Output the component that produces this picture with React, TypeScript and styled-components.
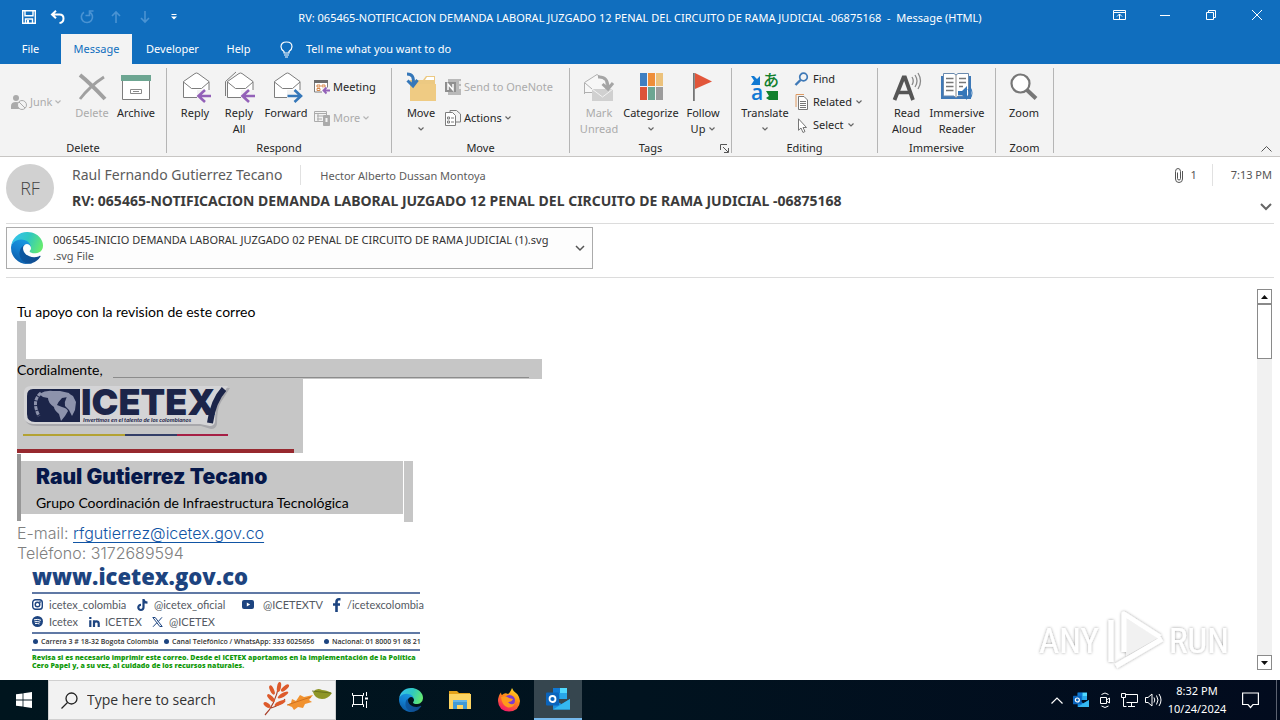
import React from 'react';
import styled, { createGlobalStyle } from 'styled-components';

const ui = '"Noto Sans", "Open Sans", sans-serif';
const body = 'Lato, "Open Sans", sans-serif';

const Global = createGlobalStyle`
  *, *::before, *::after { box-sizing: border-box; }
  body { margin: 0; background: #fff; font-family: ${ui}; font-size: 11px; line-height: 16px; color: #262626; }
  button { font: inherit; color: inherit; background: none; border: 0; padding: 0; margin: 0; cursor: default; }
  input { font: inherit; color: inherit; background: none; border: 0; padding: 0; margin: 0; min-width: 0; outline: 0; }
  p, h1, h2 { margin: 0; font: inherit; }
  svg { display: block; flex: none; overflow: visible; }
`;

const Screen = styled.div`
  display: flex;
  flex-direction: column;
  min-height: 100vh;
`;

/* ---------- title bar ---------- */
const TopBar = styled.header`
  background: #106ebe;
  color: #fff;
`;
const TitleRow = styled.div`
  display: flex;
  height: 34px;
`;
const QuickAccess = styled.div`
  display: flex;
  flex: none;
  width: 188px;
  padding-left: 14px;
`;
const QuickButton = styled.button<{ $dim?: boolean }>`
  display: grid;
  place-items: center;
  width: 29px;
  height: 33px;
  color: ${p => (p.$dim ? '#4a93d3' : '#fff')};
`;
const WindowTitle = styled.h1`
  flex: 1;
  padding-right: 4px;
  text-align: center;
  line-height: 36px;
  white-space: pre;
  overflow: hidden;
`;
const WindowButton = styled.button`
  display: grid;
  place-items: center;
  width: 46px;
  height: 30px;
`;
const TabRow = styled.nav`
  display: flex;
  height: 30px;
`;
const Tab = styled.button<{ $w: number; $active?: boolean }>`
  width: ${p => p.$w}px;
  background: ${p => (p.$active ? '#f3f3f3' : 'transparent')};
  color: ${p => (p.$active ? '#106ebe' : '#fff')};
`;
const TellMe = styled.label`
  display: flex;
  align-items: center;
  gap: 13px;
  padding-left: 16px;
  input { width: 180px; }
  input::placeholder { color: #fff; opacity: 1; }
`;

/* ---------- ribbon ---------- */
const Ribbon = styled.div`
  display: flex;
  height: 93px;
  padding-top: 4px;
  background: #f3f3f3;
  border-bottom: 1px solid #c8c6c4;
`;
const Group = styled.section<{ $w: number }>`
  position: relative;
  display: flex;
  flex-direction: column;
  width: ${p => p.$w}px;
  height: 85px;
  border-right: 1px solid #b5b5b5;
`;
const GroupTools = styled.div<{ $pad: number }>`
  display: flex;
  flex: 1;
  padding-left: ${p => p.$pad}px;
`;
const GroupName = styled.h2`
  height: 13px;
  text-align: center;
`;
const BigButton = styled.button<{ $w: number; $dim?: boolean }>`
  display: flex;
  flex-direction: column;
  align-items: center;
  flex: none;
  width: ${p => p.$w}px;
  height: 70px;
  color: ${p => (p.$dim ? '#ababab' : '#262626')};
  white-space: nowrap;
`;
const BigIcon = styled.span`
  display: grid;
  place-items: center;
  height: 37px;
`;
const SecondLine = styled.span`
  display: flex;
  align-items: center;
  justify-content: center;
  gap: 4px;
  height: 16px;
`;
const SmallStack = styled.div<{ $top: number; $gap?: number; $left: number; $w?: number }>`
  display: flex;
  flex-direction: column;
  align-items: flex-start;
  flex: none;
  gap: ${p => p.$gap ?? 0}px;
  width: ${p => (p.$w ? `${p.$w}px` : 'auto')};
  padding: ${p => p.$top}px 0 0 ${p => p.$left}px;
`;
const SmallButton = styled.button<{ $dim?: boolean; $gap?: number }>`
  display: flex;
  align-items: center;
  gap: ${p => p.$gap ?? 3}px;
  height: 16px;
  color: ${p => (p.$dim ? '#ababab' : '#262626')};
  white-space: nowrap;
`;
const Launcher = styled.button`
  position: absolute;
  right: 2px;
  bottom: 0;
`;
const RibbonEnd = styled.div`
  display: flex;
  flex: 1;
  align-items: flex-end;
  justify-content: flex-end;
  padding: 0 8px 4px 0;
`;

/* ---------- message header ---------- */
const MessageHead = styled.section`
  display: flex;
  gap: 18px;
  height: 67px;
  margin: 0 6px;
  padding-top: 7px;
  border-bottom: 1px solid #dcdcdc;
`;
const Avatar = styled.div`
  display: grid;
  place-items: center;
  width: 48px;
  height: 48px;
  border-radius: 50%;
  background: #d1d1d1;
  color: #444;
  font: 300 18px/24px "Open Sans", sans-serif;
`;
const HeadText = styled.div`
  flex: 1;
  min-width: 0;
`;
const People = styled.div`
  display: flex;
  align-items: center;
  height: 22px;
  color: #5c5c5c;
`;
const Sender = styled.span`
  padding-right: 18px;
  border-right: 1px solid #e1e1e1;
  font-size: 14px;
  line-height: 20px;
`;
const Recipient = styled.span`
  padding: 2px 0 0 19px;
`;
const Subject = styled.h2`
  padding-top: 4px;
  font-size: 14px;
  line-height: 22px;
  font-weight: 700;
  color: #3b3b3b;
  white-space: nowrap;
`;
const HeadMeta = styled.div`
  display: flex;
  flex-direction: column;
  align-items: flex-end;
  justify-content: space-between;
  padding: 0 2px 12px 0;
  color: #555;
`;
const MetaRow = styled.div`
  display: flex;
  align-items: center;
  gap: 7px;
  height: 22px;
`;
const Received = styled.time`
  margin-left: 8px;
  padding-left: 18px;
  border-left: 1px solid #e1e1e1;
  line-height: 22px;
`;
const AttachRow = styled.section`
  margin: 0 6px;
  padding: 3px 0 8px;
  border-bottom: 1px solid #dcdcdc;
`;
const Attachment = styled.button`
  display: flex;
  align-items: center;
  width: 587px;
  height: 42px;
  padding: 0 7px 0 4px;
  border: 1px solid #ababab;
  background: #fdfdfd;
  text-align: left;
  color: #333;
`;
const AttachName = styled.span`
  flex: 1;
  padding-left: 10px;
  white-space: nowrap;
  small { display: block; font-size: 11px; color: #555; }
`;

/* ---------- message body ---------- */
const Reading = styled.main`
  position: relative;
  display: flex;
  flex: 1;
`;
const Mail = styled.article`
  flex: 1;
  padding: 24px 0 0 17px;
  font-family: ${body};
  font-size: 14px;
  line-height: 19px;
  color: #000;
`;
const SelectedBlank = styled.div`
  width: 9px;
  height: 38px;
  background: #c6c6c6;
`;
const Closing = styled.p`
  display: flex;
  width: 525px;
  height: 20px;
  padding-right: 13px;
  background: #c6c6c6;
  line-height: 22px;
`;
const BlankLine = styled.span`
  flex: 1;
  height: 19px;
  margin-left: 10px;
  border-bottom: 1px solid #8c8c8c;
`;
const LogoBox = styled.div`
  width: 286px;
  height: 74px;
  background: #c6c6c6;
`;
const Signature = styled.div`
  display: flex;
  align-items: flex-start;
  gap: 1px;
  margin-top: 1px;
  padding-bottom: 1px;
`;
const SignatureBar = styled.div`
  width: 386px;
  height: 67px;
  padding-top: 7px;
  border-left: 4px solid #979797;
`;
const SignatureText = styled.div`
  height: 53px;
  padding-left: 15px;
  background: #c6c6c6;
`;
const SignatureName = styled.p`
  font-family: Inter, "Open Sans", sans-serif;
  font-size: 21px;
  line-height: 32px;
  font-weight: 900;
  color: #06184a;
`;
const SignatureEnd = styled.div`
  width: 9px;
  height: 61px;
  margin-top: 7px;
  background: #c6c6c6;
`;
const Contact = styled.p`
  font-family: Inter, sans-serif;
  font-size: 16px;
  line-height: 20px;
  font-weight: 300;
  color: #808080;
  a { color: #1155a5; text-underline-offset: 3px; }
`;
const Footer = styled.footer`
  width: 400px;
  padding-left: 15px;
`;
const Site = styled.p`
  height: 29px;
  font-family: "Open Sans", sans-serif;
  font-size: 22px;
  line-height: 26px;
  font-weight: 800;
  color: #1d4480;
`;
const Rules = styled.div<{ $pad: number }>`
  width: 388px;
  padding: ${p => p.$pad}px 0;
  border-top: 2px solid #6079a5;
  white-space: nowrap;
`;
const Socials = styled.div<{ $cols: string }>`
  display: grid;
  grid-template-columns: ${p => p.$cols};
  font-size: 11px;
  line-height: 17px;
  color: #555a63;
`;
const Social = styled.span<{ $slot?: number }>`
  display: grid;
  grid-template-columns: ${p => p.$slot ?? 17}px auto;
  align-items: center;
  justify-content: start;
`;
const Addresses = styled.div`
  display: grid;
  grid-template-columns: 131px 160px auto;
  font: 600 7px/9px "Open Sans", sans-serif;
  color: #333;
`;
const Address = styled.span`
  display: flex;
  align-items: center;
  gap: 3px;
  &::before { content: ''; width: 5px; height: 5px; margin-left: 1px; border-radius: 50%; background: #1d4480; }
`;
const Notice = styled.p`
  font: 800 7px/8px "Open Sans", sans-serif;
  color: #139a0c;
`;

const ScrollBar = styled.div`
  display: flex;
  flex-direction: column;
  width: 15px;
  margin: 11px 8px 10px 0;
  background: #f1f1f1;
`;
const ScrollButton = styled.button`
  display: grid;
  place-items: center;
  height: 15px;
  border: 1px solid #8a8a8a;
  background: #fff;
`;
const Thumb = styled.div`
  height: 55px;
  border: 1px solid #8a8a8a;
  background: #fff;
`;
const Track = styled.div`
  flex: 1;
`;
const Watermark = styled.div`
  position: absolute;
  right: 44px;
  bottom: 6px;
`;

/* ---------- taskbar ---------- */
const Taskbar = styled.footer`
  display: flex;
  height: 40px;
  background: linear-gradient(90deg, #00151e 0%, #01131f 50%, #020b1e 100%);
  color: #fff;
`;
const TaskButton = styled.button<{ $active?: boolean; $w?: number }>`
  display: grid;
  place-items: center;
  width: ${p => p.$w ?? 48}px;
  height: 40px;
  background: ${p => (p.$active ? '#36464f' : 'transparent')};
  border-bottom: ${p => (p.$active ? '2px solid #76b9ed' : '0')};
`;
const Search = styled.label`
  display: flex;
  align-items: center;
  gap: 9px;
  width: 288px;
  padding: 0 2px 0 12px;
  border: 1px solid #d0d0d0;
  background: #f2f2f2;
  color: #333;
  font: 14px/20px "Open Sans", sans-serif;
  input { flex: 1; }
  input::placeholder { color: #333; opacity: 1; }
`;
const Apps = styled.div`
  display: flex;
  gap: 1px;
  padding-left: 3px;
`;
const Tray = styled.div`
  display: flex;
  margin-left: auto;
`;
const Clock = styled.div`
  width: 64px;
  padding-top: 2px;
  text-align: center;
  line-height: 18px;
`;
const ShowDesktop = styled.button`
  width: 4px;
  margin-left: 5px;
  border-left: 1px solid #5b6170;
`;

/* ---------- glyphs ---------- */
const Caret = ({ c = '#666' }: { c?: string }) => (
  <svg width="6" height="4" viewBox="0 0 6 4" fill="none" stroke={c} strokeWidth="1.2"><path d="M.5.5 3 3 5.5.5" /></svg>
);
const Chevron = () => (
  <svg width="12" height="8" viewBox="0 0 12 8" fill="none" stroke="#666" strokeWidth="2"><path d="m1 1 5 5 5-5" /></svg>
);

const Envelope = ({ kind }: { kind: 'reply' | 'all' | 'forward' }) => (
  <svg width="32" height="34" viewBox="0 0 32 34" fill="none" stroke="#7d7d7d">
    {kind === 'all' && <path d="M2.5 26V11.500L13 2" />}
    <path d="M4.500 27.500v-16L16 3.500q1.500-1 3 0l11 8v16z" fill="#fff" />
    <path d="m4.500 12 8 6.500h10l7.500-6.500" />
    {kind === 'forward' ? (
      <g>
        <path d="M17 20h15v13H17z" fill="#f3f3f3" stroke="none" />
        <path d="M17.500 26h13M24.500 20l6.500 6-6.500 6" stroke="#3577b9" strokeWidth="2.6" />
      </g>
    ) : (
      <g>
        <path d="M18 20h14v13H18z" fill="#f3f3f3" stroke="none" />
        <path d="M32 26H19.500M26 20l-6.500 6 6.500 6" stroke="#9361b8" strokeWidth="2.6" />
      </g>
    )}
  </svg>
);

const EdgeLogo = ({ size, id }: { size: number; id: string }) => (
  <svg width={size} height={size} viewBox="4.600 4.900 256 256">
    <defs>
      <linearGradient id={id + 'a'} x1="0" x2="1"><stop offset="0" stopColor="#0c59a4" /><stop offset="1" stopColor="#114a8b" /></linearGradient>
      <linearGradient id={id + 'b'} x1=".7" y1="0" x2=".3" y2="1"><stop offset="0" stopColor="#1b9de2" /><stop offset=".5" stopColor="#127fd0" /><stop offset="1" stopColor="#0c59a4" /></linearGradient>
      <linearGradient id={id + 'c'} x1="0" y1=".3" x2="1" y2=".6"><stop offset="0" stopColor="#35c1f1" /><stop offset=".5" stopColor="#2fc8c0" /><stop offset="1" stopColor="#66eb6e" /></linearGradient>
    </defs>
    <path fill={`url(#${id}a)`} d="M235.680,195.460a93.730,93.730,0,0,1-10.540,4.710,101.870,101.870,0,0,1-35.900,6.460c-47.320,0-88.540-32.550-88.540-74.320A31.480,31.480,0,0,1,117.130,105c-42.800,1.800-53.800,46.400-53.800,72.530,0,73.880,68.090,81.370,82.760,81.370,7.910,0,19.840-2.300,27-4.560l1.310-.44A128.340,128.340,0,0,0,241,201.100a4,4,0,0,0-5.320-5.640Z" />
    <path fill={`url(#${id}b)`} d="M110.340,246.340A79.200,79.200,0,0,1,87.600,225a80.720,80.720,0,0,1,29.530-120c3.120-1.470,8.450-4.130,15.540-4a32.350,32.350,0,0,1,25.690,13,31.880,31.880,0,0,1,6.360,18.660c0-.21,24.460-79.600-80-79.600-43.900,0-80,41.660-80,78.210a130.150,130.150,0,0,0,12.110,56,128,128,0,0,0,156.380,67.110,75.550,75.550,0,0,1-62.780-8Z" />
    <path fill={`url(#${id}c)`} d="M156.940,153.780c-.81,1.050-3.300,2.500-3.300,5.660,0,2.610,1.700,5.120,4.720,7.230,14.380,10,41.490,8.680,41.560,8.680a59.560,59.560,0,0,0,30.270-8.350A61.380,61.380,0,0,0,260.640,114C261,91.480,253,76.550,249.760,70.160,229,29.840,185.770,5,136.640,5A128,128,0,0,0,4.630,131.100C5.110,94.630,41.410,65.180,84.650,65.180c3.500,0,23.460.34,42,10.070,16.340,8.580,24.900,18.940,30.850,29.210,6.180,10.670,7.280,24.150,7.280,29.520S162,147.650,156.940,153.780Z" />
  </svg>
);

const OutlookLogo = ({ size }: { size: number }) => (
  <svg width={size} height={size} viewBox="0 0 24 24">
    <path d="M7 1h14v11H7z" fill="#1490df" /><path d="M14 1h7v5h-7z" fill="#50d9ff" /><path d="M14 6h7v6h-7z" fill="#28a8ea" /><path d="M7 1h7v5H7z" fill="#0f78d4" />
    <path d="m7 12 8.500 5L24 12v10.500H7z" fill="#1a8fdf" /><path d="m24 12-17 10.500h17z" fill="#35b8f1" />
    <rect y="5.500" width="13" height="13" rx="1" fill="#0a64bc" />
    <circle cx="6.500" cy="12" r="3" fill="none" stroke="#fff" strokeWidth="1.800" />
  </svg>
);

const IcetexLogo = () => (
  <svg width="286" height="74" viewBox="0 0 286 74" role="img" aria-label="ICETEX">
    <path d="M15 9H213l-9 14q-4 6-4 22-1 5-6 5l-10-3H20q-12 0-12-9V16q0-7 7-7z" fill="#a8a8ac" />
    <path d="M14 7H211l-9 14q-4 7-4 22-1 4-5 4l-10-2H19q-12 0-12-8V14q0-7 7-7z" fill="#d4d4d6" />
    <path d="M16 10H63v33H18q-8 0-8-8V17q0-7 6-7z" fill="#1c2549" />
    <g fill="#8d93ac">
      <path d="M22 15q7-4 14-3l7 0 9 2q2 3-1 4l-6 1q-4 4-5 7l5 2q5 1 6 4l-3 5-4 5-2-7q-5-4-5-7-6-4-6-9l-5-1z" />
      <path d="M51 14l5 3 3 6-1 8-3 6-3-6-4-4q-1-4 1-7z" />
    </g>
    <path d="M24 14Q14 22 22 37" fill="none" stroke="#8d93ac" strokeWidth="3" strokeDasharray="4 1" />
    <text x="64" y="36" fontFamily="Inter, sans-serif" fontWeight="900" fontSize="36" fill="#1c2549">ICETEX</text>
    <path d="M207 10q-11 12-14 34" fill="none" stroke="#1c2549" strokeWidth="6" />
    <text x="66" y="43" fontFamily="Lato, sans-serif" fontStyle="italic" fontWeight="700" fontSize="6" fill="#1c2549">Invertimos en el talento de los colombianos</text>
    <path d="M6 56h102" stroke="#b3a233" strokeWidth="2" /><path d="M108 56h52" stroke="#343f68" strokeWidth="2" /><path d="M160 56h51" stroke="#a61f45" strokeWidth="2" />
    <path d="M0 72h277" stroke="#97292f" strokeWidth="4" />
  </svg>
);

export default function App() {
  return (
    <Screen>
      <Global />
      <TopBar>
        <TitleRow>
          <QuickAccess>
            <QuickButton aria-label="Save"><svg width="14" height="14" viewBox="0 0 14 14" fill="none" stroke="#fff" strokeWidth="1.400"><path d="M.7.7h12.600v12.600H.7zM3 .7v5h8v-5M3.500 13V9h7v4" /><path d="M5 10h2v3H5z" fill="#fff" stroke="none" /></svg></QuickButton>
            <QuickButton aria-label="Undo"><svg width="15" height="14" viewBox="0 0 15 14" fill="none" stroke="#fff" strokeWidth="2"><path d="M6 .8 2 4.500 6 8.300M2.200 4.500H9.500q4 0 4 4T9.500 13" /></svg></QuickButton>
            <QuickButton aria-label="Redo" $dim><svg width="14" height="14" viewBox="0 0 14 14" fill="none" stroke="currentColor" strokeWidth="1.600"><path d="M4 2.200A5.600 5.600 0 1 0 9.500 2M5.500 5.500h4V1h4" /></svg></QuickButton>
            <QuickButton aria-label="Previous item" $dim><svg width="10" height="12" viewBox="0 0 10 12" fill="none" stroke="currentColor" strokeWidth="1.600"><path d="M5 12V1.500M1 5l4-4 4 4" /></svg></QuickButton>
            <QuickButton aria-label="Next item" $dim><svg width="10" height="12" viewBox="0 0 10 12" fill="none" stroke="currentColor" strokeWidth="1.600"><path d="M5 0v10.500M1 7l4 4 4-4" /></svg></QuickButton>
            <QuickButton aria-label="Customize toolbar"><svg width="6" height="6" viewBox="0 0 6 6"><path d="M.5 0h5v1h-5zM0 2.500h6L3 5.500z" fill="#fff" /></svg></QuickButton>
          </QuickAccess>
          <WindowTitle>{'RV: 065465-NOTIFICACION DEMANDA LABORAL JUZGADO 12 PENAL DEL CIRCUITO DE RAMA JUDICIAL -06875168  -  Message (HTML)'}</WindowTitle>
          <WindowButton aria-label="Ribbon display options"><svg width="13" height="10" viewBox="0 0 13 10" fill="none" stroke="#fff"><path d="M.5.5h12v9H.500zM.5 2.500h12M6.500 9V4M4 6.500 6.500 4 9 6.500" /></svg></WindowButton>
          <WindowButton aria-label="Minimize"><svg width="10" height="1" viewBox="0 0 10 1"><path d="M0 0h10v1H0z" fill="#fff" /></svg></WindowButton>
          <WindowButton aria-label="Restore"><svg width="10" height="10" viewBox="0 0 10 10" fill="none" stroke="#fff"><path d="M.5 2.500h7v7h-7zM2.500 2.500v-2h7v7h-2" /></svg></WindowButton>
          <WindowButton aria-label="Close"><svg width="10" height="10" viewBox="0 0 10 10" stroke="#fff"><path d="m0 0 10 10M10 0 0 10" /></svg></WindowButton>
        </TitleRow>
        <TabRow>
          <Tab $w={61}>File</Tab>
          <Tab $w={71} $active>Message</Tab>
          <Tab $w={81}>Developer</Tab>
          <Tab $w={51}>Help</Tab>
          <TellMe>
            <svg width="13" height="17" viewBox="0 0 13 17" fill="none" stroke="#fff" strokeWidth="1.200"><path d="M4 12V10.500Q1 8.500 1 5.800 1 1 6.500 1T12 5.800Q12 8.500 9 10.500V12zM4 14h5M5 16h3" /></svg>
            <input type="text" aria-label="Tell me what you want to do" placeholder="Tell me what you want to do" />
          </TellMe>
        </TabRow>
      </TopBar>

      <Ribbon>
        <Group $w={167}>
          <GroupTools $pad={8}>
            <SmallStack $top={26} $left={3} $w={62}>
              <SmallButton $dim>
                <svg width="16" height="16" viewBox="0 0 16 16"><circle cx="5" cy="4" r="3" fill="#ababab" /><path d="M0 15v-3q0-4 5-4 2 0 4 1v6z" fill="#ababab" /><circle cx="11" cy="11" r="4.500" fill="#f3f3f3" stroke="#ababab" /><path d="m8 8 6 6" stroke="#ababab" /></svg>
                Junk <Caret c="#b5b5b5" />
              </SmallButton>
            </SmallStack>
            <BigButton $w={44} $dim>
              <BigIcon><svg width="28" height="26" viewBox="0 0 28 26" fill="none" stroke="#a0a0a0"><path d="M2 1q10 8 25 24" strokeWidth="4" /><path d="M26 3Q12 12 2 25" strokeWidth="2.800" /></svg></BigIcon>
              <span>Delete</span>
            </BigButton>
            <BigButton $w={44}>
              <BigIcon><svg width="30" height="26" viewBox="0 0 30 26"><path d="M1.500 6.500h27v19h-27z" fill="#fff" stroke="#7d7d7d" /><path d="M0 1h30v6H0z" fill="#6da692" /><path d="M9.500 15.500h11v4h-11zM12 17.500h6" fill="none" stroke="#8a8a8a" /></svg></BigIcon>
              <span>Archive</span>
            </BigButton>
          </GroupTools>
          <GroupName>Delete</GroupName>
        </Group>

        <Group $w={225}>
          <GroupTools $pad={6}>
            <BigButton $w={44}><BigIcon><Envelope kind="reply" /></BigIcon><span>Reply</span></BigButton>
            <BigButton $w={44}><BigIcon><Envelope kind="all" /></BigIcon><span>Reply</span><SecondLine>All</SecondLine></BigButton>
            <BigButton $w={50}><BigIcon><Envelope kind="forward" /></BigIcon><span>Forward</span></BigButton>
            <SmallStack $top={11} $gap={15} $left={3}>
              <SmallButton>
                <svg width="16" height="14" viewBox="0 0 16 14" fill="none"><path d="M.5 1.500h13V12H.500z" fill="#fff" stroke="#7d7d7d" /><path d="M0 0h14v3H0z" fill="#6d6d6d" /><path d="M3 5h3v2H3zM8 5h3v2H8zM3 8.500h3v2H3z" stroke="#d8884a" /><path d="M8 7.500h8V14H8z" fill="#f3f3f3" /><path d="M16 10.500H9M12.500 7.500l-3 3 3 3" stroke="#9361b8" strokeWidth="1.800" /></svg>
                Meeting
              </SmallButton>
              <SmallButton $dim>
                <svg width="16" height="15" viewBox="0 0 16 15" fill="none" stroke="#ababab"><path d="M.5.500h12v10H.500zM.5 2.500h12M3 5h6M3 8h5M4 3v7" /><path d="M9.500 4.500h6v10h-6z" fill="#ababab" /><path d="M11 6.500h3v5h-3z" fill="#f3f3f3" /></svg>
                More <Caret c="#b5b5b5" />
              </SmallButton>
            </SmallStack>
          </GroupTools>
          <GroupName>Respond</GroupName>
        </Group>

        <Group $w={178}>
          <GroupTools $pad={7}>
            <BigButton $w={44}>
              <BigIcon><svg width="31" height="30" viewBox="0 0 31 30"><path d="M4 8h13l3-4h9v25H4z" fill="#ecc982" /><path d="M19 8l2-3h7v3z" fill="#fff" /><path d="M4 12h26v17H4z" fill="#efcb83" /><path d="M1 2q8 0 6 10M1.500 8.500 7 14l4.500-6" fill="none" stroke="#3577b9" strokeWidth="3" /></svg></BigIcon>
              <span>Move</span><SecondLine><Caret /></SecondLine>
            </BigButton>
            <SmallStack $top={11} $gap={15} $left={2}>
              <SmallButton $dim>
                <svg width="16" height="16" viewBox="0 0 16 16"><path d="M3 0h13v16H3z" fill="#b9b9b9" /><path d="M14 2h2v3h-2zM14 7h2v3h-2z" fill="#e8e8e8" /><path d="M0 3h11v10H0z" fill="#8f8f8f" /><path d="M3 11V5l5 6V5" fill="none" stroke="#fff" strokeWidth="1.500" /></svg>
                Send to OneNote
              </SmallButton>
              <SmallButton>
                <svg width="16" height="16" viewBox="0 0 16 16" fill="none" stroke="#7d7d7d"><path d="M.5 2.500h7l3 3v10H.500z" fill="#fff" /><path d="M5 2V.500h6.500l4 3.500V12H11M2.500 7h2v2h-2zM6 8h3M2.500 11h2v2h-2zM6 12h3" /></svg>
                Actions <Caret />
              </SmallButton>
            </SmallStack>
          </GroupTools>
          <GroupName>Move</GroupName>
        </Group>

        <Group $w={162}>
          <GroupTools $pad={6}>
            <BigButton $w={46} $dim>
              <BigIcon><svg width="30" height="30" viewBox="0 0 30 30" fill="none" stroke="#b0b0b0"><path d="M.5 22V10.500L13 2.500l9 6v12H.5z" fill="#f7f7f7" /><path d="m1 11 7 6" /><path d="M8 17h21v12H8z" fill="#d0d0d0" stroke="none" /><path d="m8 17 10.500 8L29 17" stroke="#f3f3f3" /><path d="M14 5q10-1 10 11M18.500 12l5.500 5 5-6" stroke="#a5a5a5" strokeWidth="3" /></svg></BigIcon>
              <span>Mark</span><SecondLine>Unread</SecondLine>
            </BigButton>
            <BigButton $w={58}>
              <BigIcon><svg width="23" height="28" viewBox="0 0 23 28"><path d="M0 0h7v13H0z" fill="#3f7fc1" /><path d="M8 0h7v13H8z" fill="#ee8e3a" /><path d="M16 0h7v13h-7z" fill="#ecc27c" /><path d="M0 14h7v13H0z" fill="#dd5539" /><path d="M8 14h7v13H8z" fill="#6da692" /><path d="M16 14h7v13h-7z" fill="#9c9c9c" /></svg></BigIcon>
              <span>Categorize</span><SecondLine><Caret /></SecondLine>
            </BigButton>
            <BigButton $w={46}>
              <BigIcon><svg width="20" height="28" viewBox="0 0 20 28"><path d="M0 0h1.800v28H0z" fill="#757575" /><path d="m2 0 17 8.500L2 16z" fill="#e2563a" /></svg></BigIcon>
              <span>Follow</span><SecondLine>Up <Caret /></SecondLine>
            </BigButton>
          </GroupTools>
          <GroupName>Tags</GroupName>
          <Launcher aria-label="Tag options"><svg width="9" height="9" viewBox="0 0 9 9" fill="none" stroke="#555"><path d="M.5 6V.500H7M3 3l5 5M8.500 4v4.500H4" /></svg></Launcher>
        </Group>

        <Group $w={146}>
          <GroupTools $pad={7}>
            <BigButton $w={52}>
              <BigIcon>
                <svg width="28" height="30" viewBox="0 0 28 30"><path d="M0 4h3l3 3 3-3v9H0l3-4.500z" fill="#1179d3" /><path d="M27 19v9h-9l-3-2 3-2-3-5z" fill="#12802d" />
                  <text x="0" y="28" fontFamily="Open Sans, sans-serif" fontSize="21" fontWeight="600" fill="#1179d3">a</text>
                  <text x="12" y="14" fontFamily="Noto Sans CJK JP, sans-serif" fontSize="16" fontWeight="500" fill="#12802d">あ</text></svg>
              </BigIcon>
              <span>Translate</span><SecondLine><Caret /></SecondLine>
            </BigButton>
            <SmallStack $top={3} $gap={7} $left={4}>
              <SmallButton $gap={4}><svg width="14" height="14" viewBox="0 0 14 14" fill="none" stroke="#3f79b7"><circle cx="8.500" cy="5" r="3.800" strokeWidth="1.700" /><path d="m5.500 8-5 5" strokeWidth="2.400" /></svg>Find</SmallButton>
              <SmallButton $gap={4}><svg width="14" height="16" viewBox="0 0 14 16" fill="none"><path d="M1 13V.500h8" stroke="#de9a63" /><path d="M3.500 2.500H9l3.500 3.500v9.500h-9z" fill="#fff" stroke="#777" /><path d="M5 7.500h6M5 9.500h6M5 11.500h6M5 13.500h6" stroke="#777" /></svg>Related <Caret /></SmallButton>
              <SmallButton $gap={4}><svg width="14" height="15" viewBox="0 0 14 15"><path d="M3.500.8v11.500L6 10l2 4.500 2-1L8 9.500h3.500z" fill="#fff" stroke="#777" /></svg>Select <Caret /></SmallButton>
            </SmallStack>
          </GroupTools>
          <GroupName>Editing</GroupName>
        </Group>

        <Group $w={118}>
          <GroupTools $pad={7}>
            <BigButton $w={44}>
              <BigIcon><svg width="28" height="30" viewBox="0 0 28 30" fill="none" stroke="#555"><path d="M1.500 28 10.500 5.500h1.500L20 28" strokeWidth="3.800" /><path d="M5 20.500h12" strokeWidth="3.500" /><path d="M19 5q2.500 4 0 8M22 3q4 6 0 12M25 1q5 8 0 16" strokeWidth="1.300" stroke="#888" /></svg></BigIcon>
              <span>Read</span><SecondLine>Aloud</SecondLine>
            </BigButton>
            <BigButton $w={56}>
              <BigIcon><svg width="32" height="28" viewBox="0 0 32 28" fill="none"><path d="M0 3h30v23H0z" fill="#3f79b7" /><path d="M2.500.5H13l2 1.500 2-1.500h10.500v22.500H17l-2 2-2-2H2.500z" fill="#fff" stroke="#6a8aae" /><path d="M15 2v22" stroke="#888" /><path d="M5 5.500h7.500M5 9.500h7.500M5 13.500h7.500M5 17.500h7.500M18 5.500h7M18 9.500h7M18 13.500h4" stroke="#777" strokeWidth="1.500" /><path d="M17 18h4l5-5v14l-5-5h-4z" fill="#3577b9" /><path d="M27 16q3 4 0 8M29 14q4 6 0 12" stroke="#3577b9" /></svg></BigIcon>
              <span>Immersive</span><SecondLine>Reader</SecondLine>
            </BigButton>
          </GroupTools>
          <GroupName>Immersive</GroupName>
        </Group>

        <Group $w={58}>
          <GroupTools $pad={6}>
            <BigButton $w={44}>
              <BigIcon><svg width="28" height="28" viewBox="0 0 28 28"><path d="m17 17 9 8.500" stroke="#777" strokeWidth="4" /><circle cx="10.500" cy="10.500" r="9" fill="#fff" stroke="#777" strokeWidth="2.200" /></svg></BigIcon>
              <span>Zoom</span>
            </BigButton>
          </GroupTools>
          <GroupName>Zoom</GroupName>
        </Group>
        <RibbonEnd><button aria-label="Collapse the ribbon"><svg width="11" height="6" viewBox="0 0 11 6" fill="none" stroke="#555"><path d="m.5 5.500 5-5 5 5" /></svg></button></RibbonEnd>
      </Ribbon>

      <MessageHead>
        <Avatar>RF</Avatar>
        <HeadText>
          <People><Sender>Raul Fernando Gutierrez Tecano</Sender><Recipient>Hector Alberto Dussan Montoya</Recipient></People>
          <Subject>RV: 065465-NOTIFICACION DEMANDA LABORAL JUZGADO 12 PENAL DEL CIRCUITO DE RAMA JUDICIAL -06875168</Subject>
        </HeadText>
        <HeadMeta>
          <MetaRow>
            <svg width="8" height="15" viewBox="0 0 8 15" fill="none" stroke="#555"><path d="M2.500 4.500v6q0 1.500 1.500 1.500t1.500-1.500V3.500Q5.500.5 3 .500T.5 3.500v7.500Q.5 14.500 4 14.500T7.500 11V3" /></svg>
            <span>1</span>
            <Received>7:13 PM</Received>
          </MetaRow>
          <button aria-label="Expand header"><Chevron /></button>
        </HeadMeta>
      </MessageHead>

      <AttachRow>
        <Attachment>
          <EdgeLogo size={32} id="file" />
          <AttachName>006545-INICIO DEMANDA LABORAL JUZGADO 02 PENAL DE CIRCUITO DE RAMA JUDICIAL (1).svg<small>.svg File</small></AttachName>
          <svg width="10" height="7" viewBox="0 0 10 7" fill="none" stroke="#555" strokeWidth="1.500"><path d="m1 1 4 4 4-4" /></svg>
        </Attachment>
      </AttachRow>

      <Reading>
        <Mail>
          <p>Tu apoyo con la revision de este correo</p>
          <SelectedBlank />
          <Closing>Cordialmente,<BlankLine /></Closing>
          <LogoBox><IcetexLogo /></LogoBox>
          <Signature>
            <SignatureBar>
              <SignatureText>
                <SignatureName>Raul Gutierrez Tecano</SignatureName>
                <p>Grupo Coordinación de Infraestructura Tecnológica</p>
              </SignatureText>
            </SignatureBar>
            <SignatureEnd />
          </Signature>
          <Contact>E-mail: <a href="mailto:rfgutierrez@icetex.gov.co">rfgutierrez@icetex.gov.co</a></Contact>
          <Contact>Teléfono: 3172689594</Contact>
          <Footer>
            <Site>www.icetex.gov.co</Site>
            <Rules $pad={2}>
              <Socials $cols="105px 105px 90px auto">
                <Social><svg width="11" height="11" viewBox="0 0 11 11" fill="none" stroke="#1d4480" strokeWidth="1.400"><rect x=".7" y=".7" width="9.600" height="9.600" rx="2.800" /><circle cx="5.500" cy="5.500" r="2.300" /><circle cx="8.300" cy="2.700" r=".3" /></svg>icetex_colombia</Social>
                <Social><svg width="11" height="12" viewBox="0 0 11 12" fill="none" stroke="#1d4480" strokeWidth="2.200"><path d="M6.500 0v8.300A2.600 2.600 0 1 1 4 5.800M6.500.5Q7 3.500 10.500 3.700" /></svg>@icetex_oficial</Social>
                <Social $slot={21}><svg width="12" height="9" viewBox="0 0 12 9"><rect width="12" height="9" rx="2" fill="#1d4480" /><path d="m4.800 2.500 3.400 2-3.400 2z" fill="#fff" /></svg>@ICETEXTV</Social>
                <Social $slot={15}><svg width="9" height="14" viewBox="0 0 9 14" fill="none" stroke="#1d4480" strokeWidth="2.600"><path d="M8.500 1.300H7Q4.500 1.300 4.500 4v10M1 6.500h7" /></svg>/icetexcolombia</Social>
              </Socials>
              <Socials $cols="57px 63px auto">
                <Social><svg width="11" height="11" viewBox="0 0 11 11" fill="none"><circle cx="5.500" cy="5.500" r="5.500" fill="#1d4480" /><path d="M2 3.800q4-1 7 .5M2.500 5.800q3-.8 5.700.4M3 7.600q2.500-.6 4.500.4" stroke="#fff" /></svg>Icetex</Social>
                <Social $slot={16}><svg width="11" height="10" viewBox="0 0 11 10" fill="none" stroke="#1d4480" strokeWidth="2.200"><path d="M1.300 3.200V10M1.300 0v2M5 10V3.200M5 6.500Q5 4.300 7.300 4.300t2.400 2.200V10" /></svg>ICETEX</Social>
                <Social><svg width="11" height="10" viewBox="0 0 11 10" fill="none" stroke="#1d4480"><path d="M.8.5h2.400l7 9H7.800zM10 .3 6.300 4.500M4.800 5.800 1 9.800" /></svg>@ICETEX</Social>
              </Socials>
            </Rules>
            <Rules $pad={3}>
              <Addresses>
                <Address>Carrera 3 # 18-32 Bogota Colombia</Address>
                <Address>Canal Telefónico / WhatsApp: 333 6025656</Address>
                <Address>Nacional: 01 8000 91 68 21</Address>
              </Addresses>
            </Rules>
            <Rules $pad={3}>
              <Notice>Revisa si es necesario imprimir este correo. Desde el ICETEX aportamos en la implementación de la Política<br />Cero Papel y, a su vez, al cuidado de los recursos naturales.</Notice>
            </Rules>
          </Footer>
        </Mail>
        <ScrollBar>
          <ScrollButton aria-label="Scroll up"><svg width="7" height="4" viewBox="0 0 7 4"><path d="M0 4 3.500 0 7 4z" fill="#111" /></svg></ScrollButton>
          <Thumb />
          <Track />
          <ScrollButton aria-label="Scroll down"><svg width="7" height="4" viewBox="0 0 7 4"><path d="m0 0 3.500 4L7 0z" fill="#111" /></svg></ScrollButton>
        </ScrollBar>
        <Watermark>
          <svg width="200" height="68" viewBox="0 0 200 68" role="img" aria-label="ANY RUN">
            <defs><filter id="glow" x="-10%" y="-10%" width="120%" height="120%"><feDropShadow dx="0" dy="0" stdDeviation="1.500" floodColor="#000" floodOpacity=".4" /></filter></defs>
            <g filter="url(#glow)" fill="#fff">
              <text x="3" y="47" fontFamily="Roboto Condensed, Liberation Sans Narrow, sans-serif" fontSize="35">ANY</text>
              <text x="133" y="47" fontFamily="Roboto Condensed, Liberation Sans Narrow, sans-serif" fontSize="35">RUN</text>
            </g>
            <g filter="url(#glow)">
              <path d="M90 12v38l32-18z" fill="#f1f1f1" />
              <path d="M88 46V8l36 23M75 14v42M80 60l46-27" fill="none" stroke="#fff" strokeWidth="5" strokeLinejoin="round" />
            </g>
          </svg>
        </Watermark>
      </Reading>

      <Taskbar>
        <TaskButton aria-label="Start"><svg width="16" height="16" viewBox="0 0 16 16" fill="#fff"><path d="m0 2.300 6.600-.9v6.200H0zM7.400 1.300 16 0v7.600H7.400zM0 8.400h6.600v6.200L0 13.700zM7.400 8.400H16V16l-8.600-1.300z" /></svg></TaskButton>
        <Search>
          <svg width="17" height="17" viewBox="0 0 17 17" fill="none" stroke="#222" strokeWidth="1.300"><circle cx="10.500" cy="6.500" r="5.500" /><path d="M6.500 10.500.5 16.500" /></svg>
          <input type="search" aria-label="Type here to search" placeholder="Type here to search" />
          <svg width="70" height="34" viewBox="0 0 70 34">
            <path d="M2 32Q12 22 16 2M8 25q10-3 14-9" fill="none" stroke="#a8402a" strokeWidth="1.200" />
            <g fill="#dd5a2b"><ellipse cx="9" cy="7" rx="2" ry="5" transform="rotate(-25 9 7)" /><ellipse cx="16" cy="4" rx="2" ry="5" transform="rotate(10 16 4)" /><ellipse cx="22" cy="5" rx="2" ry="5" transform="rotate(50 22 5)" /><ellipse cx="8" cy="15" rx="2" ry="5" transform="rotate(-45 8 15)" /><ellipse cx="20" cy="12" rx="2" ry="6" transform="rotate(60 20 12)" /><ellipse cx="4" cy="22" rx="2" ry="4" transform="rotate(-55 4 22)" /><ellipse cx="17" cy="20" rx="2" ry="6" transform="rotate(65 17 20)" /></g>
            <path d="M24 22l4-2 1-4 4 2 4-6 4 2 9-2-4 5 3 2-7 2-2 4-5-1-4 3-2-3z" fill="#f1922f" /><path d="M24 22l24-8" stroke="#c96a1a" strokeWidth=".8" />
            <path d="M50 9q4-5 9-2 4 0 10 3-4 6-10 6-7 0-9-7z" fill="#8f9626" /><path d="M49 8q9 1 19 2" stroke="#5e6a1a" fill="none" strokeWidth=".8" />
          </svg>
        </Search>
        <TaskButton aria-label="Task view"><svg width="17" height="16" viewBox="0 0 17 16" fill="none" stroke="#fff"><path d="M.5 1v2.500h11V1M.5 15v-2.500h11V15M1.500 3.500v9M10.500 3.500v9M14.500 0v4M14.500 9v7" /><path d="M13 5.500h3v2h-3z" fill="#fff" stroke="none" /></svg></TaskButton>
        <Apps>
          <TaskButton aria-label="Edge"><EdgeLogo size={24} id="task" /></TaskButton>
          <TaskButton aria-label="File Explorer"><svg width="22" height="20" viewBox="0 0 22 20"><path d="M0 1h8l2 2h11v5H0z" fill="#e3a21a" /><path d="M0 4h22v15H0z" fill="#fcd462" /><path d="M4 10h14v9h-4v-4H8v4H4z" fill="#3f9ad6" /><path d="M4 10h14v2H4z" fill="#63b5e8" /></svg></TaskButton>
          <TaskButton aria-label="Firefox">
            <svg width="24" height="24" viewBox="0 0 24 24">
              <defs><linearGradient id="fox" x1=".8" y1="0" x2=".3" y2="1"><stop offset="0" stopColor="#ffe226" /><stop offset=".45" stopColor="#ff8a16" /><stop offset="1" stopColor="#f5156c" /></linearGradient></defs>
              <path d="M15 0q1 3 4 5t4 8q-.5 10-11 10.500Q1.500 23 1 13 1 8 4 4.500q0 2 1 2.500Q8 4 11 6q2-1 4-6z" fill="url(#fox)" /><circle cx="12.500" cy="12.500" r="5.500" fill="#7b3bd1" /><path d="M4 9q5-2 8 1l4 1q-1 3-5 3 3 4 7 1-2 5-7 4.500Q5 18 4 9z" fill="#ff9a1c" />
            </svg>
          </TaskButton>
          <TaskButton aria-label="Outlook" $active><OutlookLogo size={24} /></TaskButton>
        </Apps>
        <Tray>
          <TaskButton $w={24} aria-label="Show hidden icons"><svg width="12" height="7" viewBox="0 0 12 7" fill="none" stroke="#fff" strokeWidth="1.200"><path d="m.5 6.500 5.500-5.500 5.500 5.500" /></svg></TaskButton>
          <TaskButton $w={24} aria-label="Outlook status"><OutlookLogo size={16} /></TaskButton>
          <TaskButton $w={24} aria-label="Meet now"><svg width="14" height="16" viewBox="0 0 14 16" fill="none" stroke="#fff"><path d="M2.500 5.500h6v6h-6zM8.500 8l3-2v5l-3-2M3.500 2.500q3.500-3 7 0M3.500 14q3.500 3 7 0" /></svg></TaskButton>
          <TaskButton $w={24} aria-label="Network"><svg width="17" height="14" viewBox="0 0 17 14" fill="none" stroke="#fff"><path d="M5 1.500h11.500v8h-11M.5.500h4v4h-4zM2.500 4.500v9h3M10.500 9.500V13M7 13.500h7" /></svg></TaskButton>
          <TaskButton $w={24} aria-label="Volume"><svg width="17" height="14" viewBox="0 0 17 14" fill="none" stroke="#fff"><path d="M.5 4.500h2.500L7 1v12L3 9.500H.500zM9 4.500q1.500 2.500 0 5M11.500 2.500q3 4.500 0 9M14 1q4 6 0 12" /></svg></TaskButton>
          <Clock>8:32 PM<br />10/24/2024</Clock>
          <TaskButton $w={42} aria-label="Notifications"><svg width="17" height="17" viewBox="0 0 17 17" fill="none" stroke="#fff" strokeWidth="1.200"><path d="M.6 1h15.800v11.500H11L8.500 15.500 6 12.500H.600z" /></svg></TaskButton>
          <ShowDesktop aria-label="Show desktop" />
        </Tray>
      </Taskbar>
    </Screen>
  );
}
